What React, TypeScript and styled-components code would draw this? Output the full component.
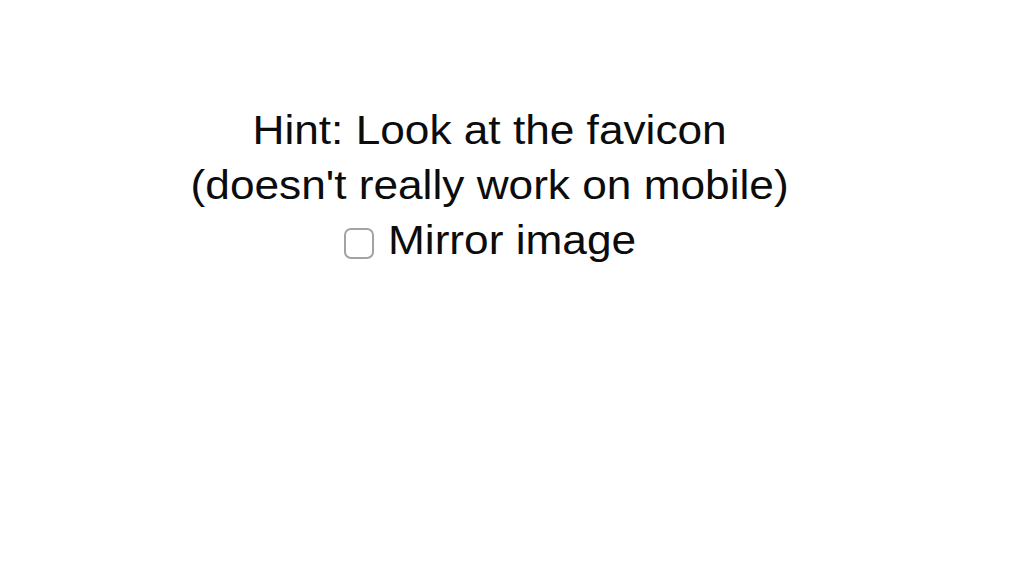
import React from "react";
import styled, { createGlobalStyle } from "styled-components";

const Global = createGlobalStyle`
  html, body { margin: 0; padding: 0; background: #fff; }
  body { font-family: "Liberation Sans", Arial, Helvetica, sans-serif; color: #000; }
`;

const Page = styled.main`
  width: 980px;
  padding-top: 103px;
  display: flex;
  flex-direction: column;
  align-items: center;
  font-size: 40px;
  line-height: 55px;
  text-align: center;
  color: #0c0c0c;
`;

const Line = styled.div`
  transform: scaleX(1.105);
  white-space: nowrap;
`;

const Label = styled.label`
  display: flex;
  align-items: center;
  gap: 14px;
`;

const Box = styled.span`
  width: 30px;
  height: 31px;
  box-sizing: border-box;
  border: 2px solid #a3a3a3;
  border-radius: 7px;
  background: #fff;
  margin-top: 6px;
`;

const LabelText = styled.span`
  display: inline-block;
  transform: scaleX(1.105);
  transform-origin: left center;
  margin-right: 24px;
`;

export default function App() {
  return (
    <>
      <Global />
      <Page>
        <Line>Hint: Look at the favicon</Line>
        <Line>(doesn't really work on mobile)</Line>
        <Label>
          <Box role="checkbox" aria-checked="false" />
          <LabelText>Mirror image</LabelText>
        </Label>
      </Page>
    </>
  );
}
